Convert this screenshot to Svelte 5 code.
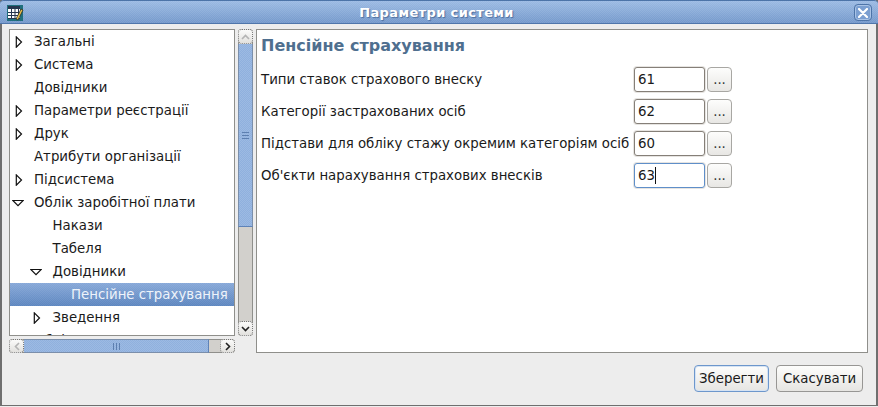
<script>
    // tree rows: depth, arrow state (null = leaf), label
    const nodes = [
        { depth: 0, arrow: 'right', label: 'Загальні' },
        { depth: 0, arrow: 'right', label: 'Система' },
        { depth: 0, arrow: null, label: 'Довідники' },
        { depth: 0, arrow: 'right', label: 'Параметри реєстрації' },
        { depth: 0, arrow: 'right', label: 'Друк' },
        { depth: 0, arrow: null, label: 'Атрибути організації' },
        { depth: 0, arrow: 'right', label: 'Підсистема' },
        { depth: 0, arrow: 'down', label: 'Облік заробітної плати' },
        { depth: 1, arrow: null, label: 'Накази' },
        { depth: 1, arrow: null, label: 'Табеля' },
        { depth: 1, arrow: 'down', label: 'Довідники' },
        { depth: 2, arrow: null, label: 'Пенсійне страхування', selected: true },
        { depth: 1, arrow: 'right', label: 'Зведення' },
        { depth: 0, arrow: null, label: 'Облік' }
    ];

    const fields = [
        { label: 'Типи ставок страхового внеску', value: '61' },
        { label: 'Категорії застрахованих осіб', value: '62' },
        { label: 'Підстави для обліку стажу окремим категоріям осіб', value: '60' },
        { label: "Об'єкти нарахування страхових внесків", value: '63', focused: true }
    ];
</script>

<div class="window">
    <header class="titlebar">
        <svg class="app-icon" width="18" height="18" viewBox="0 0 18 18">
            <rect x="1" y="1" width="16" height="16" fill="#1f6f7d" />
            <rect x="2" y="2" width="12" height="3" fill="#27364f" />
            <rect x="2" y="5" width="12" height="10" fill="#fff" />
            <path d="M2 8.5h12M2 11.5h12M2 14.5h12M5.5 5v10M9 5v10M12.5 5v10" stroke="#27364f" stroke-width="1" fill="none" />
            <path d="M10 15 L15 5 L17 6 L12 16 Z" fill="#e8c04a" stroke="#1c1c1c" stroke-width="0.7" />
        </svg>
        <span class="title">Параметри системи</span>
        <button class="close" aria-label="Закрити">
            <svg width="10" height="10" viewBox="0 0 10 10">
                <path d="M1 1 L9 9 M9 1 L1 9" stroke="#fff" stroke-width="2.2" stroke-linecap="round" />
            </svg>
        </button>
    </header>

    <div class="content">
        <div class="main">
            <div class="left">
                <div class="tree-row">
                    <div class="tree">
                        {#each nodes as node}
                            <div class="node" class:selected={node.selected} style="padding-left: {node.depth * 18.5 + 24}px">
                                {#if node.arrow === 'right'}
                                    <svg class="arrow" style="left: {node.depth * 18 + 5}px" width="8" height="12" viewBox="0 0 8 12">
                                        <path d="M1.3 0.8 L6.5 6 L1.3 11.2 Z" fill="#fff" stroke="#111" stroke-width="1.2" />
                                    </svg>
                                {:else if node.arrow === 'down'}
                                    <svg class="arrow" style="left: {node.depth * 18 + 2}px" width="12" height="8" viewBox="0 0 12 8">
                                        <path d="M0.8 1.5 L11.2 1.5 L6 6.7 Z" fill="#fff" stroke="#111" stroke-width="1.2" />
                                    </svg>
                                {/if}
                                {node.label}
                            </div>
                        {/each}
                    </div>
                    <div class="vscroll">
                        <div class="sb-btn up">
                            <svg width="9" height="6" viewBox="0 0 9 6"><path d="M1 5 L4.5 1.5 L8 5" stroke="#b4b4b4" stroke-width="1.6" fill="none" /></svg>
                        </div>
                        <div class="thumb v-thumb"><span class="grip v"></span></div>
                        <div class="trough"></div>
                        <div class="sb-btn down">
                            <svg width="9" height="6" viewBox="0 0 9 6"><path d="M1 1 L4.5 4.5 L8 1" stroke="#222" stroke-width="1.6" fill="none" /></svg>
                        </div>
                    </div>
                </div>
                <div class="hscroll">
                    <div class="sb-btn left-btn">
                        <svg width="6" height="9" viewBox="0 0 6 9"><path d="M5 1 L1.5 4.5 L5 8" stroke="#b4b4b4" stroke-width="1.6" fill="none" /></svg>
                    </div>
                    <div class="thumb h-thumb"><span class="grip h"></span></div>
                    <div class="trough"></div>
                    <div class="sb-btn right-btn">
                        <svg width="6" height="9" viewBox="0 0 6 9"><path d="M1 1 L4.5 4.5 L1 8" stroke="#222" stroke-width="1.6" fill="none" /></svg>
                    </div>
                </div>
            </div>

            <section class="panel">
                <h2>Пенсійне страхування</h2>
                <div class="form">
                    {#each fields as field}
                        <span class="label">{field.label}</span>
                        <div class="input" class:focused={field.focused}>{field.value}{#if field.focused}<i class="caret"></i>{/if}</div>
                        <button class="dots">...</button>
                    {/each}
                </div>
            </section>
        </div>

        <footer class="actions">
            <button class="action default">Зберегти</button>
            <button class="action">Скасувати</button>
        </footer>
    </div>
</div>

<style>
    :global(body) {
        margin: 0;
        background: #ededed;
    }

    .window {
        width: 878px;
        height: 406px;
        box-sizing: border-box;
        display: flex;
        flex-direction: column;
        border: 1px solid #6f6f6f;
        border-top: none;
        border-left-width: 2px;
        border-right-width: 2px;
        background: #ededed;
        font-family: "DejaVu Sans", sans-serif;
        font-size: 13.33px;
        color: #1a1a1a;
    }

    .titlebar {
        position: relative;
        height: 24px;
        margin: 0 -2px;
        padding-right: 5px;
        flex: none;
        display: flex;
        align-items: center;
        justify-content: center;
        box-sizing: border-box;
        border-top: 1px solid #4d74a8;
        border-bottom: 1px solid #4f76ab;
        border-radius: 4px 4px 0 0;
        background-color: #83a6d6;
        background-image:
            conic-gradient(rgba(255, 255, 255, 0.09) 25%, transparent 0 50%, rgba(255, 255, 255, 0.09) 0 75%, transparent 0),
            linear-gradient(#9bbae3, #7398cb);
        background-size: 2px 2px, 100% 100%;
    }

    .app-icon {
        position: absolute;
        left: 6px;
        top: 3px;
    }

    .title {
        color: #fff;
        font-weight: bold;
        font-size: 13px;
        letter-spacing: 0.38px;
        text-shadow: 1px 1px 1px #4d6f9f;
    }

    .close {
        position: absolute;
        right: 6px;
        top: 3px;
        width: 18px;
        height: 17px;
        padding: 0;
        display: flex;
        align-items: center;
        justify-content: center;
        background: #7b9fd1;
        border: 1px solid #4d74a8;
        border-radius: 4px;
        box-shadow: inset 0 0 0 1px #a9c3e6;
    }

    .content {
        flex: 1;
        display: flex;
        flex-direction: column;
        padding: 5px 8px 0 7px;
        min-height: 0;
    }

    .main {
        display: flex;
        gap: 3px;
        height: 324px;
    }

    .left {
        width: 244px;
        display: flex;
        flex-direction: column;
        gap: 3px;
    }

    .tree-row {
        height: 307px;
        display: flex;
        gap: 3px;
    }

    .tree {
        width: 226px;
        box-sizing: border-box;
        overflow: hidden;
        background: #fff;
        border: 1px solid #8f8f8b;
    }

    .node {
        position: relative;
        height: 23px;
        line-height: 23px;
        box-sizing: border-box;
        white-space: nowrap;
    }

    .node.selected {
        color: #eef3fa;
        background-color: #6f95ca;
        background-image:
            conic-gradient(rgba(255, 255, 255, 0.07) 25%, transparent 0 50%, rgba(255, 255, 255, 0.07) 0 75%, transparent 0),
            linear-gradient(#86a8d8, #5c85bf);
        background-size: 2px 2px, 100% 100%;
    }

    .arrow {
        position: absolute;
        top: 50%;
        transform: translateY(-50%);
    }

    .vscroll,
    .hscroll {
        display: flex;
        background: #d2d0cc;
        border-radius: 4px;
    }

    .vscroll {
        width: 15px;
        flex-direction: column;
        box-shadow: inset 1px 0 0 #8f8f8b, inset -1px 0 0 #8f8f8b;
    }

    .hscroll {
        height: 14px;
        width: 226px;
        box-shadow: inset 0 1px 0 #8f8f8b, inset 0 -1px 0 #8f8f8b;
    }

    .sb-btn {
        flex: none;
        display: flex;
        align-items: center;
        justify-content: center;
        box-sizing: border-box;
        border: 1px dotted #777;
        border-radius: 4px;
        background: linear-gradient(#fbfbfa, #e2e1de);
    }

    .vscroll .sb-btn {
        height: 15px;
    }

    .hscroll .sb-btn {
        width: 15px;
    }

    .thumb {
        display: flex;
        align-items: center;
        justify-content: center;
        box-sizing: border-box;
        background-color: #8fb0de;
        background-image: conic-gradient(rgba(255, 255, 255, 0.12) 25%, transparent 0 50%, rgba(255, 255, 255, 0.12) 0 75%, transparent 0);
        background-size: 2px 2px;
    }

    .v-thumb {
        height: 183px;
        border-left: 1px solid #7b8fab;
        border-right: 1px solid #7b8fab;
        border-bottom: 1px solid #5f83b8;
    }

    .h-thumb {
        width: 185px;
        border-top: 1px solid #7b8fab;
        border-bottom: 1px solid #7b8fab;
        border-right: 1px solid #5f83b8;
    }

    .trough {
        flex: 1;
    }

    .grip {
        display: block;
    }

    .grip.v {
        width: 7px;
        height: 7px;
        background: repeating-linear-gradient(#5d7fb0 0 1px, transparent 1px 3px);
    }

    .grip.h {
        width: 7px;
        height: 7px;
        background: repeating-linear-gradient(90deg, #5d7fb0 0 1px, transparent 1px 3px);
    }

    .panel {
        flex: 1;
        box-sizing: border-box;
        background: #fff;
        border: 1px solid #8f8f8b;
        padding: 0 0 0 4px;
    }

    h2 {
        margin: 0;
        height: 37px;
        line-height: 32px;
        font-size: 16px;
        font-weight: bold;
        color: #4f6f8f;
    }

    .form {
        display: grid;
        grid-template-columns: 373px 71px 25px;
        grid-auto-rows: 25px;
        column-gap: 0;
        row-gap: 7px;
        align-items: center;
    }

    .label {
        white-space: nowrap;
    }

    .input {
        height: 25px;
        box-sizing: border-box;
        line-height: 23px;
        padding-left: 3px;
        border: 1px solid #857f78;
        border-radius: 3px;
        background: #fff;
        box-shadow: 0 0 0 1px #e6e4e1;
    }

    .input.focused {
        border-color: #5f8fc9;
    }

    .caret {
        display: inline-block;
        width: 1px;
        height: 17px;
        margin-left: 0;
        vertical-align: -4px;
        background: #111;
    }

    .dots {
        margin-left: 2px;
        width: 25px;
        height: 25px;
        padding: 0;
        border: 1px solid #a8a7a3;
        border-radius: 4px;
        background: linear-gradient(#fdfdfc, #e8e7e4);
        font: inherit;
        color: #333;
    }

    .actions {
        flex: 1;
        display: flex;
        justify-content: flex-end;
        align-items: flex-start;
        gap: 7px;
        padding: 12px 5px 0 0;
    }

    .action {
        height: 27px;
        padding: 0;
        width: 75px;
        font: inherit;
        color: #1a1a1a;
        border: 1px solid #979694;
        border-radius: 4px;
        background: linear-gradient(#fdfdfc, #e6e5e2);
    }

    .action.default {
        border-color: #6d97cc;
        box-shadow: inset 0 0 0 1px #d6e3f3;
    }

    .action:last-child {
        width: 87px;
    }
</style>
